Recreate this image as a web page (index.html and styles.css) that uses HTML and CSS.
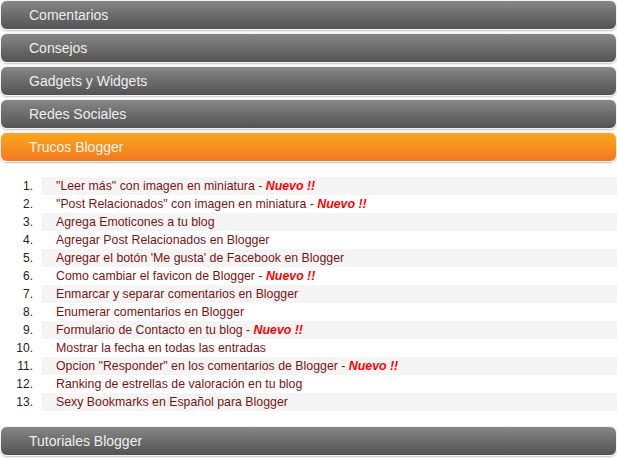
FILE: index.html
```html
<!DOCTYPE html>
<html lang="es">
<head>
<meta charset="utf-8">
<title>Trucos Blogger</title>
<link rel="stylesheet" href="styles.css">
</head>
<body>
<div class="menu">
  <div class="bar">Comentarios</div>
  <div class="bar">Consejos</div>
  <div class="bar">Gadgets y Widgets</div>
  <div class="bar">Redes Sociales</div>
  <div class="bar active">Trucos Blogger</div>
  <ol class="list">
    <li><span class="t">"Leer más" con imagen en miniatura - <em>Nuevo !!</em></span></li>
    <li><span class="t">"Post Relacionados" con imagen en miniatura - <em>Nuevo !!</em></span></li>
    <li><span class="t">Agrega Emoticones a tu blog</span></li>
    <li><span class="t">Agregar Post Relacionados en Blogger</span></li>
    <li><span class="t">Agregar el botón 'Me gusta' de Facebook en Blogger</span></li>
    <li><span class="t">Como cambiar el favicon de Blogger - <em>Nuevo !!</em></span></li>
    <li><span class="t">Enmarcar y separar comentarios en Blogger</span></li>
    <li><span class="t">Enumerar comentarios en Blogger</span></li>
    <li><span class="t">Formulario de Contacto en tu blog - <em>Nuevo !!</em></span></li>
    <li><span class="t">Mostrar la fecha en todas las entradas</span></li>
    <li><span class="t">Opcion "Responder" en los comentarios de Blogger - <em>Nuevo !!</em></span></li>
    <li><span class="t">Ranking de estrellas de valoración en tu blog</span></li>
    <li><span class="t">Sexy Bookmarks en Español para Blogger</span></li>
  </ol>
  <div class="bar">Tutoriales Blogger</div>
</div>
</body>
</html>
```
FILE: styles.css
```css
html, body {
  margin: 0;
  padding: 0;
  background: #fff;
}
body {
  font-family: "Liberation Sans", Arial, sans-serif;
}
.menu {
  width: 617px;
}
.bar {
  height: 28px;
  line-height: 28px;
  margin-bottom: 3px;
  border: 1px solid #f2f2f2;
  border-radius: 7px;
  background: linear-gradient(to bottom, #878787 0%, #6c6c6c 50%, #535353 100%);
  box-shadow: 0 1px 2px rgba(0, 0, 0, 0.25);
  color: #eeeeee;
  font-size: 14px;
  padding-left: 28px;
  box-sizing: content-box;
}
.bar.active {
  background: linear-gradient(to bottom, #fba61d 0%, #f7901f 50%, #f47820 100%);
  color: #fff4e6;
}
.list {
  list-style: none;
  margin: 0;
  padding: 12px 0 15px 0;
  counter-reset: item;
}
.list li {
  display: flex;
  counter-increment: item;
  font-size: 12.35px;
  line-height: 18px;
  height: 18px;
}
.list li::before {
  content: counter(item) ".";
  width: 33px;
  margin-right: 8px;
  text-align: right;
  color: #222;
  flex: none;
  font-size: 12px;
}
.list .t {
  flex: 1;
  padding-left: 15px;
  color: #7a1414;
}
.list li:nth-child(odd) .t {
  background: #f4f4f4;
}
.list em {
  color: #ff0000;
  font-weight: bold;
  font-style: italic;
}
```
